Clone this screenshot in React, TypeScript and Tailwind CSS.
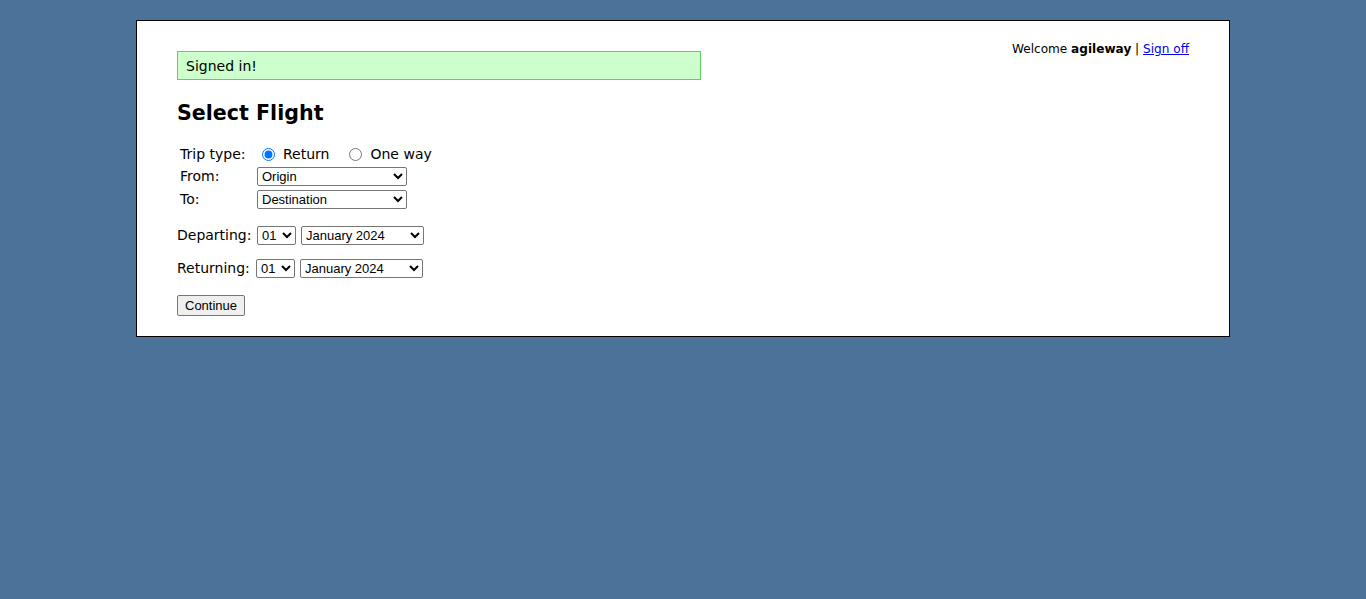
import { useState } from 'react';

const SELECT = "h-[19px] border border-[#767676] rounded-[2px] bg-white text-[13px] text-black pl-0 font-['Liberation_Sans',Arial,sans-serif]";

export default function App() {
  const [trip, setTrip] = useState('return');

  return (
    <div className="min-h-[599px] bg-[#4b7298] pt-5 font-['DejaVu_Sans',Verdana,sans-serif] text-black">
      <div className="mx-[136px] bg-white border border-black px-10 pt-[30px] pb-5 h-[317px]">
        <div className="flex items-start justify-between">
          <div className="w-[524px] h-[29px] border border-[#66cc66] bg-[#ccffcc] pl-2 pt-[1px] flex items-center text-[14px]">
            Signed in!
          </div>
          <div className="text-[12.1px] -mt-[11px]">
            Welcome <b>agileway</b> | <a href="#" className="text-[#0000ee] underline">Sign off</a>
          </div>
        </div>

        <h2 className="text-[20.6px] font-bold mt-[19px] mb-[16px] leading-[28px]">Select Flight</h2>

        <div className="pl-[3px] text-[14px] flex flex-col">
          <div className="flex items-center h-[22px]">
            <span className="w-[81px]">Trip type:</span>
            <label className="flex items-center gap-[8px] ml-[1px]">
              <input type="radio" name="trip" checked={trip === 'return'} onChange={() => setTrip('return')} className="m-0 w-[13px] h-[13px]" />
              Return
            </label>
            <label className="flex items-center gap-[8px] ml-[20px]">
              <input type="radio" name="trip" checked={trip === 'oneway'} onChange={() => setTrip('oneway')} className="m-0 w-[13px] h-[13px]" />
              One way
            </label>
          </div>
          <div className="flex items-center h-[23px]">
            <span className="w-[77px]">From:</span>
            <select className={SELECT + ' w-[150px]'}><option>Origin</option></select>
          </div>
          <div className="flex items-center h-[23px]">
            <span className="w-[77px]">To:</span>
            <select className={SELECT + ' w-[150px]'}><option>Destination</option></select>
          </div>
        </div>

        <div className="flex items-center gap-[5px] text-[14px] mt-[14px] h-[20px]">
          <span className="w-[75px]">Departing:</span>
          <select className={SELECT + ' w-[39px]'}><option>01</option></select>
          <select className={SELECT + ' w-[123px]'}><option>January 2024</option></select>
        </div>

        <div className="flex items-center gap-[5px] text-[14px] mt-[13px] h-[20px]">
          <span className="w-[74px]">Returning:</span>
          <select className={SELECT + ' w-[39px]'}><option>01</option></select>
          <select className={SELECT + ' w-[123px]'}><option>January 2024</option></select>
        </div>

        <button className="mt-[17px] h-[21px] px-[7px] border border-[#767676] rounded-[2px] bg-[#efefef] text-[13px] font-['Liberation_Sans',Arial,sans-serif]">
          Continue
        </button>
      </div>
    </div>
  );
}
